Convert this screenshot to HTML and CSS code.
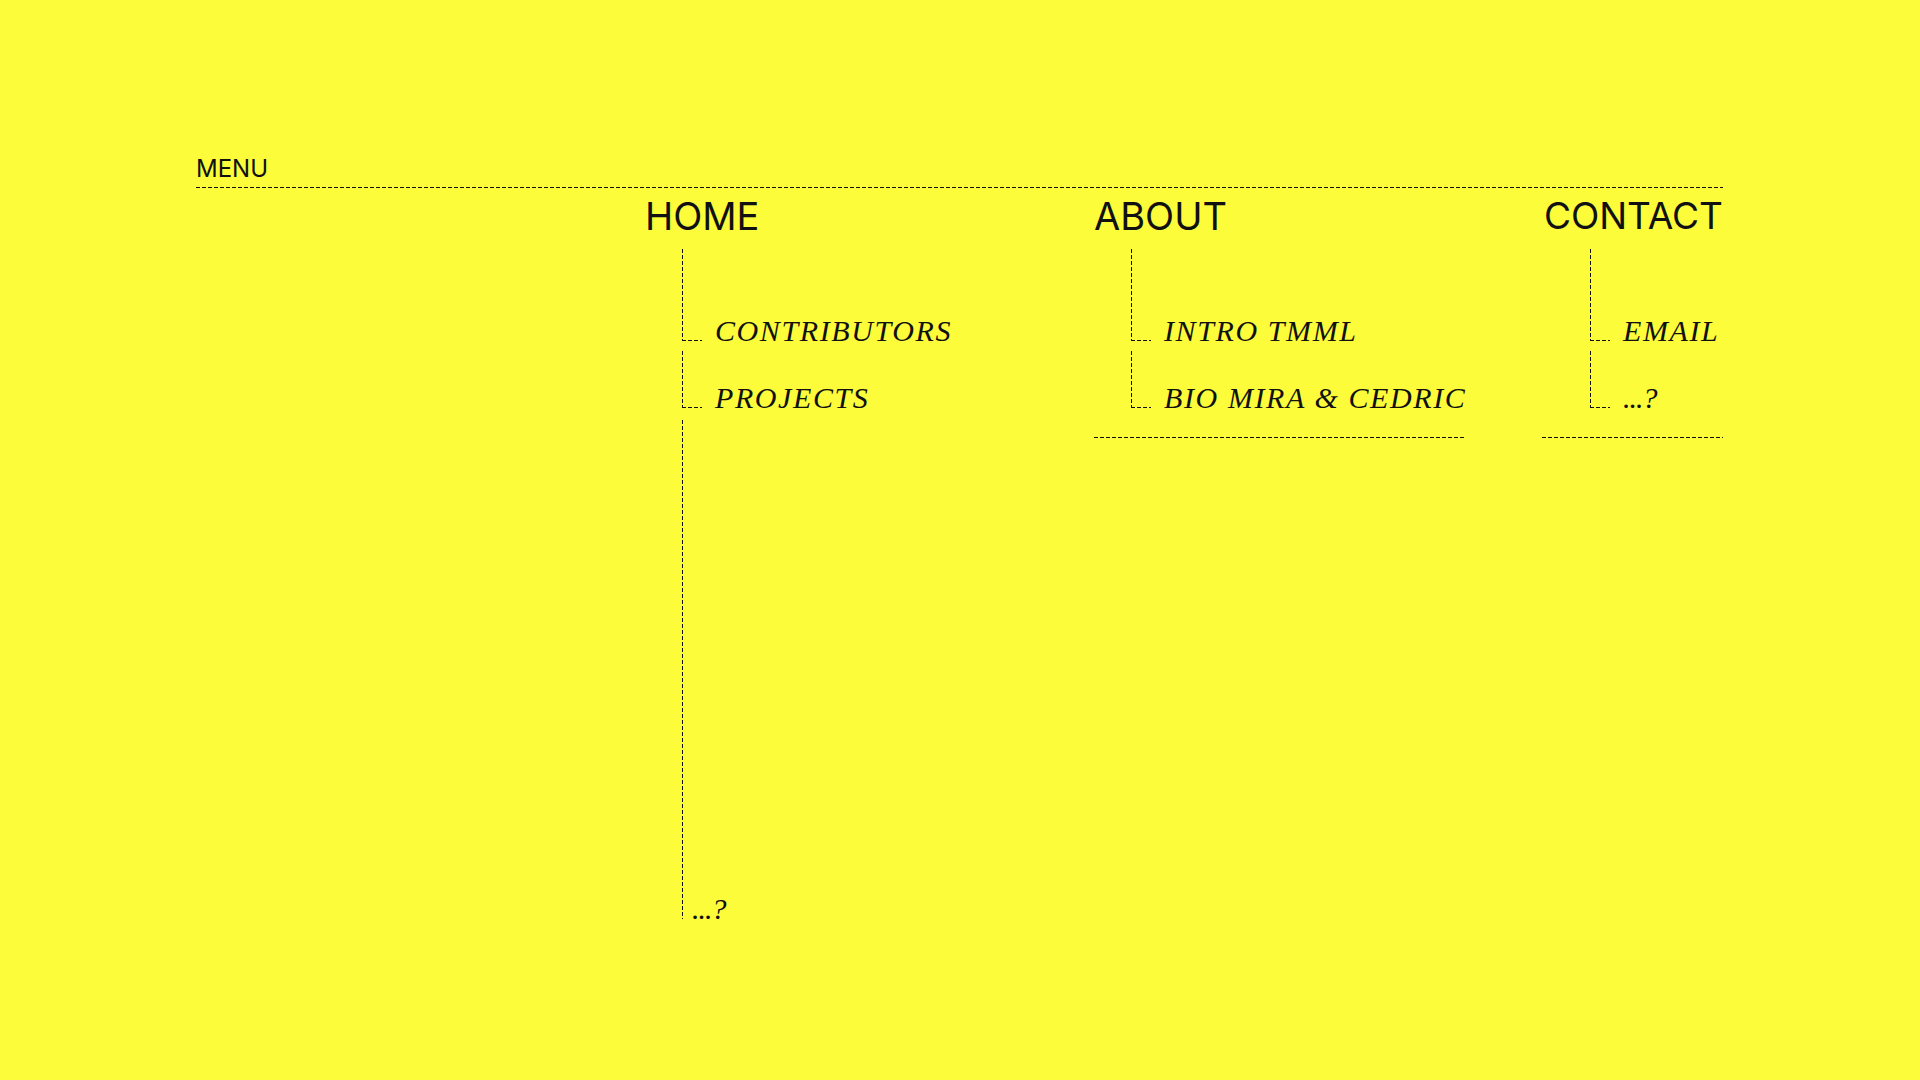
FILE: index.html
```html
<!DOCTYPE html>
<html lang="en">
<head>
<meta charset="utf-8">
<title>Menu</title>
<link rel="stylesheet" href="styles.css">
</head>
<body>
<div class="page">
  <header class="menu-label">MENU</header>
  <nav class="nav">
    <div class="spacer"></div>
    <section class="col col-home">
      <h2 class="col-title">HOME</h2>
      <ul class="tree">
        <li class="branch branch-first"><span class="elbow"></span><span class="label">CONTRIBUTORS</span></li>
        <li class="branch branch-second"><span class="elbow"></span><span class="label">PROJECTS</span></li>
        <li class="branch branch-tall"><span class="elbow elbow-plain"></span><span class="label label-near label-tight">...?</span></li>
      </ul>
    </section>
    <section class="col col-about col-closed">
      <h2 class="col-title">ABOUT</h2>
      <ul class="tree">
        <li class="branch branch-first"><span class="elbow"></span><span class="label">INTRO TMML</span></li>
        <li class="branch branch-second"><span class="elbow"></span><span class="label">BIO MIRA &amp; CEDRIC</span></li>
      </ul>
    </section>
    <section class="col col-contact col-closed">
      <h2 class="col-title">CONTACT</h2>
      <ul class="tree tree-contact">
        <li class="branch branch-first"><span class="elbow"></span><span class="label">EMAIL</span></li>
        <li class="branch branch-second"><span class="elbow"></span><span class="label label-tight">...?</span></li>
      </ul>
    </section>
  </nav>
</div>
</body>
</html>
```
FILE: styles.css
```css
html, body {
  margin: 0;
  padding: 0;
}

body {
  background: #fcfc3b;
  color: #111;
  font-family: Inter, "Liberation Sans", sans-serif;
  width: 1920px;
  height: 1080px;
  overflow: hidden;
}

.page {
  padding: 155px 0 0 196px;
  width: 1527px;
}

.menu-label {
  font-size: 24px;
  line-height: 28px;
  padding-bottom: 5px;
  background-image: repeating-linear-gradient(to right, #111 0 4px, transparent 4px 6px);
  background-size: 100% 1px;
  background-position: left bottom;
  background-repeat: no-repeat;
}

.nav {
  display: grid;
  grid-template-columns: 449px 449px 448px 181px;
  align-items: start;
}

.col {
  justify-self: start;
}

.col-contact {
  justify-self: stretch;
}

.col-closed {
  padding-bottom: 30px;
  background-image: repeating-linear-gradient(to right, #111 0 4px, transparent 4px 6px);
  background-size: 100% 1px;
  background-position: left bottom;
  background-repeat: no-repeat;
}

.col-title {
  margin: 5px 0 0;
  font-size: 38px;
  font-weight: 400;
  line-height: 46px;
  letter-spacing: 0;
}

.col-contact .col-title {
  font-size: 37px;
  text-align: right;
}

.tree {
  list-style: none;
  margin: 10px 0 0;
  padding: 0 0 0 37px;
}

.tree-contact {
  padding-left: 48px;
}

.branch {
  display: flex;
  align-items: flex-end;
}

.branch-first {
  height: 92px;
}

.branch-second {
  height: 57px;
  margin-top: 10px;
}

.branch-tall {
  height: 499px;
  margin-top: 12px;
}

.elbow {
  align-self: stretch;
  width: 20px;
  flex: none;
  background-image:
    repeating-linear-gradient(to bottom, #111 0 4px, transparent 4px 6px),
    repeating-linear-gradient(to right, #111 0 4px, transparent 4px 6px);
  background-size: 1px 100%, 100% 1px;
  background-position: left top, left bottom;
  background-repeat: no-repeat;
}

.elbow-plain {
  width: 1px;
  background-image: repeating-linear-gradient(to bottom, #111 0 4px, transparent 4px 6px);
  background-size: 1px 100%;
  background-position: left top;
}

.label {
  margin-left: 13px;
  font-family: "Liberation Serif", "DejaVu Serif", serif;
  font-style: italic;
  font-size: 30px;
  line-height: 20px;
  letter-spacing: 1.6px;
  white-space: nowrap;
}

.label-near {
  margin-left: 9px;
}

.label-tight {
  letter-spacing: -1px;
}
```
